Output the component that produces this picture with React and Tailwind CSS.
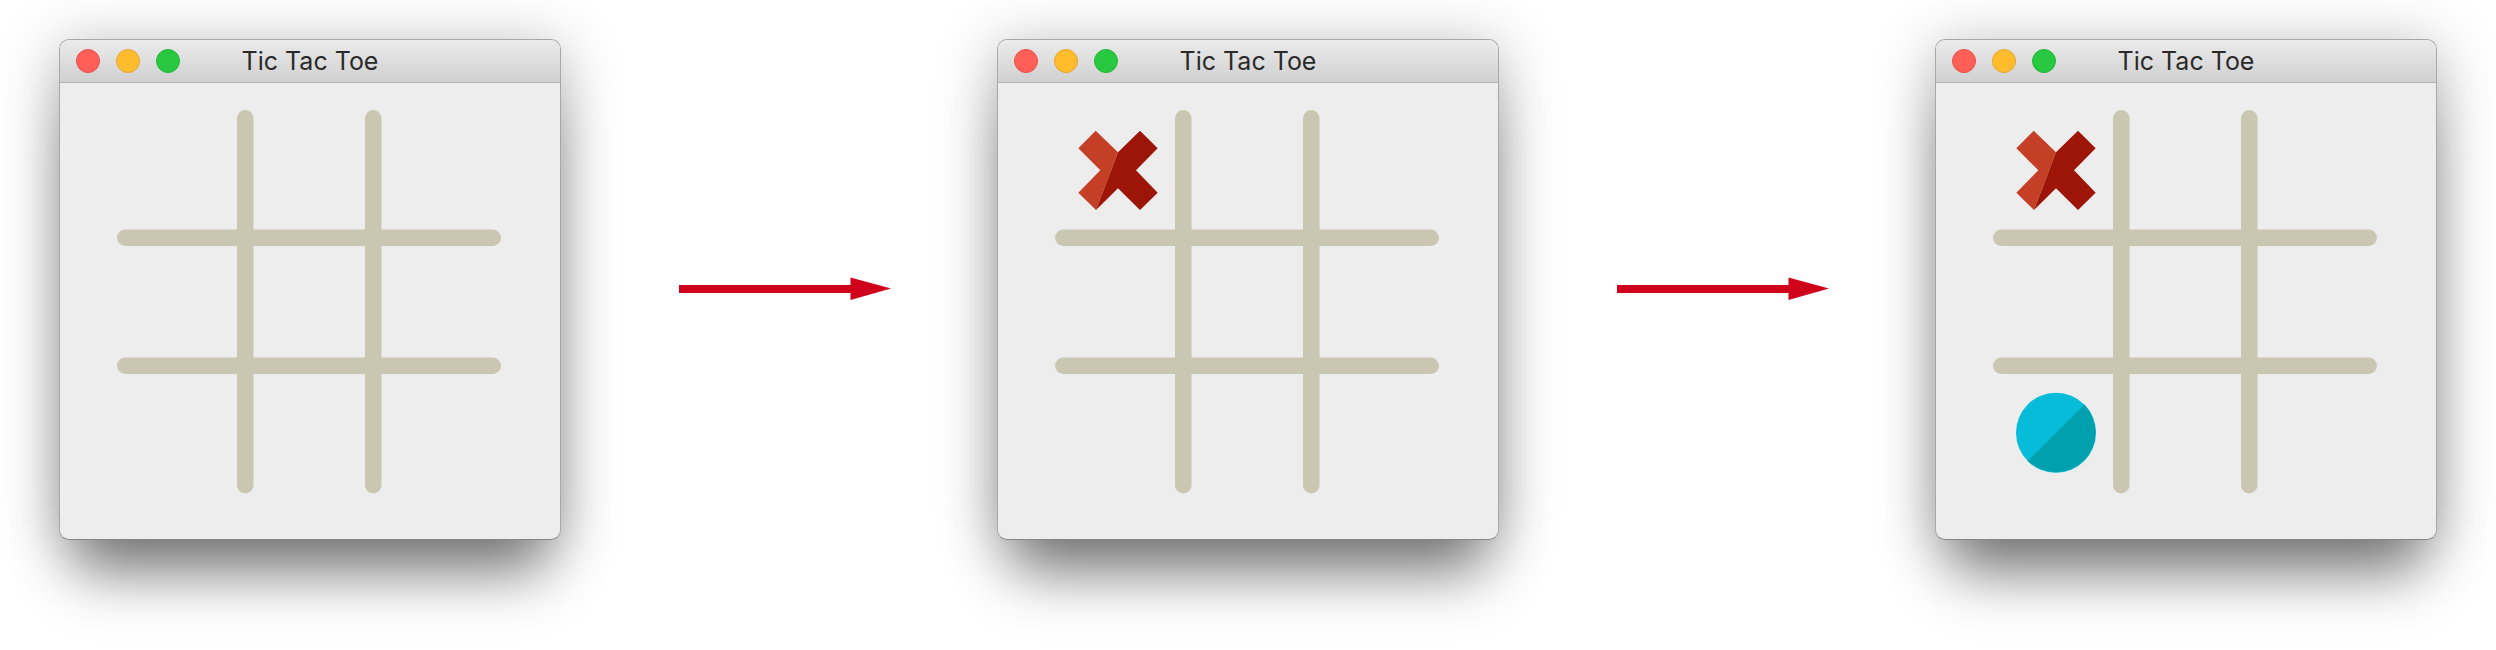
const Board = ({ x, o }) => (
  <svg width="384" height="384" viewBox="0 0 384 384" className="block">
    <g fill="#c9c6b1">
      <rect x="120" y="0" width="16.5" height="383.5" rx="8.25" />
      <rect x="248" y="0" width="16.5" height="383.5" rx="8.25" />
      <rect x="0" y="119.5" width="384" height="16.5" rx="8.25" />
      <rect x="0" y="247.5" width="384" height="16.5" rx="8.25" />
    </g>
    {x && (
      <g>
        <polygon fill="#c53f26" points="40.67,20.67 23.33,38.33 45.33,60.33 23.33,82.67 41,100 63,42.33" />
        <polygon fill="#9c1506" points="63,42.33 85,20.67 102.67,38.33 81,60.33 102.67,82.67 85,100 63,78.33 41,100" />
      </g>
    )}
    {o && (
      <g>
        <circle cx="63" cy="322.7" r="40" fill="#07bcd8" />
        <path d="M91.28 294.42 A40 40 0 0 1 34.72 350.98 Z" fill="#00a0ae" />
      </g>
    )}
  </svg>
);

const Light = ({ c }) => <span className={`block w-6 h-6 rounded-full border ${c}`} />;

const Win = ({ x, o }) => (
  <div className="w-[502px] h-[501px] shrink-0 rounded-[10px] border border-[#a8a8a8] border-b-[#858585] bg-[#ededed] overflow-hidden shadow-[0_52px_56px_-18px_rgba(0,0,0,0.42),0_8px_60px_0_rgba(0,0,0,0.3)] box-border">
    <div className="relative flex h-[43px] items-center gap-4 border-b border-[#b4b4b4] bg-gradient-to-b from-[#ebebeb] to-[#d0d0d0] pl-[16px] box-border">
      <Light c="bg-[#ff5f57] border-[#e8504a]" />
      <Light c="bg-[#ffbd2e] border-[#e5a52b]" />
      <Light c="bg-[#28c840] border-[#25b53a]" />
      <span className="absolute inset-0 flex items-center justify-center pt-[2px] text-[25px] font-normal text-[#2a2a2a] font-['Inter',sans-serif]">Tic Tac Toe</span>
    </div>
    <div className="pl-[57px] pt-[27px]">
      <Board x={x} o={o} />
    </div>
  </div>
);

const Arrow = () => (
  <svg width="212" height="24" viewBox="0 0 212 24" className="block shrink-0">
    <rect x="0" y="8" width="172" height="8" fill="#d0021b" />
    <polygon points="171.5,0.5 212,11.5 171.5,23" fill="#d0021b" />
  </svg>
);

export default function App() {
  return (
    <div className="flex h-[650px] w-[2496px] items-start overflow-hidden bg-white pl-[59px] pt-[39px]">
      <Win />
      <div className="ml-[118px] mr-[106px] mt-[238px]"><Arrow /></div>
      <Win x />
      <div className="ml-[118px] mr-[106px] mt-[238px]"><Arrow /></div>
      <Win x o />
    </div>
  );
}
